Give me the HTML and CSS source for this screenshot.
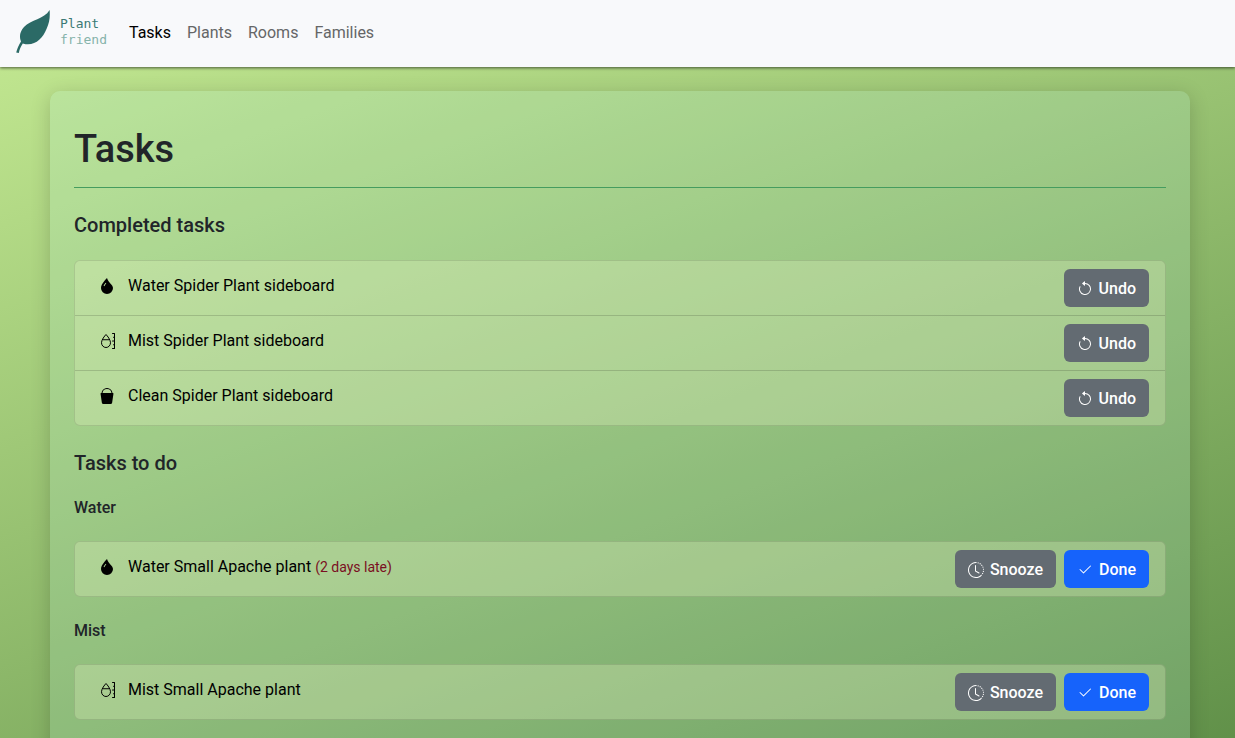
FILE: index.html
```html
<!DOCTYPE html>
<html lang="en">
<head>
<meta charset="utf-8">
<meta name="viewport" content="width=device-width, initial-scale=1">
<title>Plant friend - Tasks</title>
<link rel="stylesheet" href="styles.css">
</head>
<body>
<svg class="sprite" aria-hidden="true">
  <symbol id="droplet" viewBox="0 0 16 16"><path fill-rule="evenodd" d="M8 16a6 6 0 0 0 6-6c0-1.655-1.122-2.904-2.432-4.362C10.254 4.176 8.75 2.503 8 0c0 0-6 5.686-6 10a6 6 0 0 0 6 6ZM6.646 4.646l.708.708c-.29.29-1.128 1.311-1.907 2.870l-.894-.448c.82-1.641 1.717-2.753 2.093-3.130Z"/></symbol>
  <symbol id="moisture" viewBox="0 0 16 16"><path d="M13.5 0a.5.5 0 0 0 0 1H15v2.75h-.5a.5.5 0 0 0 0 1h.5V7.5h-1.5a.5.5 0 0 0 0 1H15v2.75h-.5a.5.5 0 0 0 0 1h.5V15h-1.5a.5.5 0 0 0 0 1h2a.5.5 0 0 0 .5-.5V.5a.5.5 0 0 0-.5-.5h-2z"/><path fill="none" stroke="currentColor" stroke-linejoin="round" d="M7 1.5C5.600 3 2.500 6.700 2.500 9.733 2.500 12.400 4.500 14.500 7 14.500s4.500-2.100 4.500-4.767C11.500 6.700 8.400 3 7 1.500zM3.500 6.737h7"/></symbol>
  <symbol id="bucket" viewBox="0 0 16 16"><path d="M2.522 5H2a.5.5 0 0 0-.494.574l1.372 9.149A1.5 1.5 0 0 0 4.360 16h7.278a1.5 1.5 0 0 0 1.483-1.277l1.373-9.149A.5.5 0 0 0 14 5h-.522A5.500 5.500 0 0 0 2.522 5zm1.005 0a4.500 4.500 0 0 1 8.945 0H3.527z"/></symbol>
  <symbol id="undo" viewBox="0 0 16 16"><path fill-rule="evenodd" d="M8 3a5 5 0 1 1-4.546 2.914.5.5 0 0 0-.908-.417A6 6 0 1 0 8 2v1z"/><path d="M8 4.466V.534a.25.25 0 0 0-.41-.192L5.230 2.308a.25.25 0 0 0 0 .384l2.360 1.966A.25.25 0 0 0 8 4.466z"/></symbol>
  <symbol id="clock" viewBox="0 0 16 16"><path d="M8.515 1.019A7 7 0 0 0 8 1V0a8 8 0 0 1 .589.022l-.074.997zm2.004.45a7.003 7.003 0 0 0-.985-.299l.219-.976c.383.086.76.2 1.126.342l-.36.933zm1.370.71a7.010 7.010 0 0 0-.439-.27l.493-.87a8.025 8.025 0 0 1 .979.654l-.615.789a6.996 6.996 0 0 0-.418-.302zm1.834 1.790a6.990 6.990 0 0 0-.653-.796l.724-.69c.27.285.52.59.747.91l-.818.576zm.744 1.352a7.080 7.080 0 0 0-.214-.468l.893-.45a7.976 7.976 0 0 1 .45 1.088l-.95.313a7.023 7.023 0 0 0-.179-.483zm.53 2.507a6.991 6.991 0 0 0-.1-1.025l.985-.17c.067.386.106.778.116 1.170l-1 .025zm-.131 1.538c.033-.17.06-.339.081-.51l.993.123a7.957 7.957 0 0 1-.23 1.155l-.964-.267c.046-.165.086-.332.12-.501zm-.952 2.379c.184-.29.346-.594.486-.908l.914.405c-.16.36-.345.706-.555 1.038l-.845-.535zm-.964 1.205c.122-.122.239-.248.35-.378l.758.653a8.073 8.073 0 0 1-.401.432l-.707-.707z"/><path d="M8 1a7 7 0 1 0 4.950 11.950l.707.707A8.001 8.001 0 1 1 8 0v1z"/><path d="M7.500 3a.5.5 0 0 1 .5.5v5.210l3.248 1.856a.5.5 0 0 1-.496.868l-3.500-2A.5.5 0 0 1 7 9V3.500a.5.5 0 0 1 .5-.5z"/></symbol>
  <symbol id="check" viewBox="0 0 16 16"><path d="M13.854 3.646a.5.5 0 0 1 0 .708l-7 7a.5.5 0 0 1-.708 0l-3.500-3.500a.5.5 0 1 1 .708-.708L6.500 10.293l6.646-6.647a.5.5 0 0 1 .708 0z"/></symbol>
</svg>

<header class="navbar">
  <a class="brand" href="#">
    <svg class="leaf" viewBox="0 0 34 44" aria-hidden="true"><path d="M33.600 0C34.200 7 33.500 13 30.500 19 26.500 29 18 37 6.800 33.500 4.500 37 3.500 39.500 2.800 43L.2 42.500C1.200 38.500 2.600 35.500 5 31.500 3 27 3.800 21.500 8 17 15 9.500 28 9.500 33.600 0Z"/></svg>
    <span class="brand-text"><span class="brand-top">Plant</span><span class="brand-bottom">friend</span></span>
  </a>
  <nav class="nav">
    <a class="nav-link active" href="#">Tasks</a>
    <a class="nav-link" href="#">Plants</a>
    <a class="nav-link" href="#">Rooms</a>
    <a class="nav-link" href="#">Families</a>
  </nav>
</header>

<main class="card">
  <h1>Tasks</h1>
  <hr>
  <h2>Completed tasks</h2>
  <ul class="list">
    <li class="task"><a class="task-name" href="#"><svg class="icon"><use href="#droplet"/></svg><span>Water Spider Plant sideboard</span></a><div class="actions"><button class="btn" type="button"><svg class="icon"><use href="#undo"/></svg>Undo</button></div></li>
    <li class="task"><a class="task-name" href="#"><svg class="icon"><use href="#moisture"/></svg><span>Mist Spider Plant sideboard</span></a><div class="actions"><button class="btn" type="button"><svg class="icon"><use href="#undo"/></svg>Undo</button></div></li>
    <li class="task"><a class="task-name" href="#"><svg class="icon"><use href="#bucket"/></svg><span>Clean Spider Plant sideboard</span></a><div class="actions"><button class="btn" type="button"><svg class="icon"><use href="#undo"/></svg>Undo</button></div></li>
  </ul>
  <h2>Tasks to do</h2>
  <h3>Water</h3>
  <ul class="list">
    <li class="task"><a class="task-name" href="#"><svg class="icon"><use href="#droplet"/></svg><span>Water Small Apache plant <small class="late">(2 days late)</small></span></a><div class="actions"><button class="btn" type="button"><svg class="icon"><use href="#clock"/></svg>Snooze</button><button class="btn primary" type="button"><svg class="icon"><use href="#check"/></svg>Done</button></div></li>
  </ul>
  <h3>Mist</h3>
  <ul class="list">
    <li class="task"><a class="task-name" href="#"><svg class="icon"><use href="#moisture"/></svg><span>Mist Small Apache plant</span></a><div class="actions"><button class="btn" type="button"><svg class="icon"><use href="#clock"/></svg>Snooze</button><button class="btn primary" type="button"><svg class="icon"><use href="#check"/></svg>Done</button></div></li>
  </ul>
</main>
</body>
</html>
```
FILE: styles.css
```css
*, *::before, *::after { box-sizing: border-box; }

body {
  margin: 0;
  min-height: 100vh;
  display: flex;
  flex-direction: column;
  font: 400 16px/24px Roboto, Inter, "Liberation Sans", sans-serif;
  color: #212529;
  background: linear-gradient(160deg, #c5ea93 0%, #5f8f48 100%);
}

a { color: inherit; text-decoration: none; }

.sprite { display: none; }

.icon {
  flex: none;
  width: 16px;
  height: 16px;
  fill: currentColor;
}

.navbar {
  display: flex;
  align-items: center;
  gap: 14px;
  min-height: 67px;
  padding: 0 16px 4px;
  background: #f8f9fb;
  box-shadow: 0 1px 3px rgba(0, 0, 0, 0.6);
}

.brand { display: flex; align-items: center; gap: 10px; }

.leaf { width: 34px; height: 44px; fill: #2b6a66; }

.brand-text {
  display: flex;
  flex-direction: column;
  padding-top: 1px;
  font: 400 13px/16px "DejaVu Sans Mono", monospace;
}

.brand-top { color: #3b7a75; }
.brand-bottom { color: #86b3aa; }

.nav { display: flex; }
.nav-link { padding: 10px 8px 8px; color: #656667; }
.nav-link.active { color: #000; }

.card {
  flex: 1;
  margin: 24px 45px 0 50px;
  padding: 34px 24px 18px;
  border-radius: 10px 10px 0 0;
  background: rgba(182, 240, 225, 0.18);
  box-shadow: 0 4px 20px rgba(0, 0, 0, 0.18);
}

h1, h2, h3 { margin: 0; font-weight: 500; }

h1 { font-size: 38px; line-height: 48px; }
h2 { margin-top: 25px; font-size: 20px; line-height: 24px; }
h3 { margin-top: 23px; font-size: 16px; line-height: 20px; }

hr {
  margin: 14px 0 25px;
  border: 0;
  border-top: 1px solid #459c5f;
}

.list {
  list-style: none;
  margin: 23px 0 24px;
  padding: 0;
  border: 1px solid rgba(0, 0, 0, 0.11);
  border-radius: 6px;
  background: rgba(232, 246, 196, 0.28);
}

.task {
  display: flex;
  justify-content: space-between;
  padding: 8px 16px;
}

.task + .task { border-top: 1px solid rgba(0, 0, 0, 0.15); }

.task-name {
  display: flex;
  align-items: center;
  align-self: flex-start;
  gap: 13px;
  padding: 5px 8px;
  color: #000;
}

.late { font-size: 14px; color: #7a0f22; }

.actions { display: flex; gap: 8px; }

.btn {
  display: flex;
  align-items: center;
  gap: 6px;
  padding: 7px 12px 5px;
  border: 1px solid transparent;
  border-radius: 6px;
  font: inherit;
  font-weight: 500;
  color: #fff;
  background: #636b72;
}

.btn.primary { background: #1663fb; }
```
